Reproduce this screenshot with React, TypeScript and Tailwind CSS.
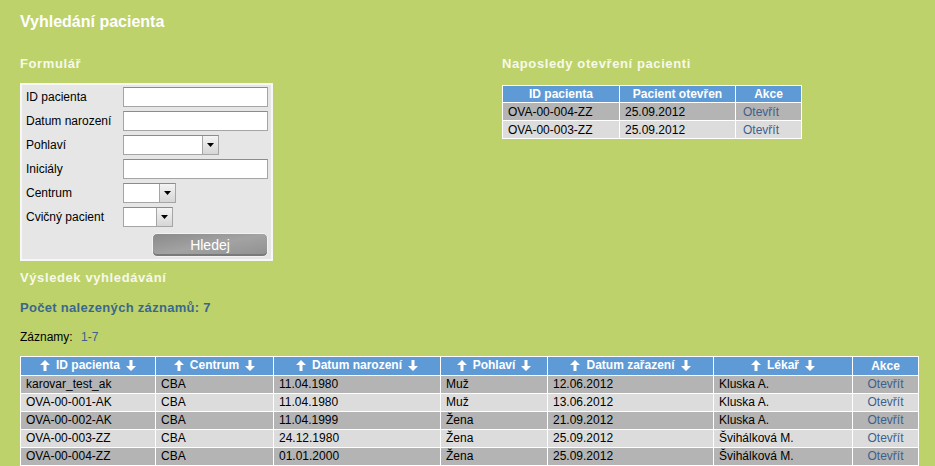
import React from 'react';

const headerCols = [
  { label: 'ID pacienta', w: 'w-[135px]' },
  { label: 'Centrum', w: 'w-[118px]' },
  { label: 'Datum narození', w: 'w-[167px]' },
  { label: 'Pohlaví', w: 'w-[107px]' },
  { label: 'Datum zařazení', w: 'w-[166px]' },
  { label: 'Lékař', w: 'w-[139px]' },
];

const rows = [
  ['karovar_test_ak', 'CBA', '11.04.1980', 'Muž', '12.06.2012', 'Kluska A.'],
  ['OVA-00-001-AK', 'CBA', '11.04.1980', 'Muž', '13.06.2012', 'Kluska A.'],
  ['OVA-00-002-AK', 'CBA', '11.04.1999', 'Žena', '21.09.2012', 'Kluska A.'],
  ['OVA-00-003-ZZ', 'CBA', '24.12.1980', 'Žena', '25.09.2012', 'Švihálková M.'],
  ['OVA-00-004-ZZ', 'CBA', '01.01.2000', 'Žena', '25.09.2012', 'Švihálková M.'],
  ['OVA-00-005-ZZ', 'CBA', '15.03.1985', 'Žena', '25.09.2012', 'Švihálková M.'],
];

const recent = [
  ['OVA-00-004-ZZ', '25.09.2012'],
  ['OVA-00-003-ZZ', '25.09.2012'],
];

const Up = () => (
  <svg width="10" height="11" viewBox="0 0 10 11" className="inline-block">
    <path d="M5 0 L10 5 L6.5 5 L6.5 11 L3.5 11 L3.5 5 L0 5 Z" fill="white" />
  </svg>
);

const Down = () => (
  <svg width="10" height="11" viewBox="0 0 10 11" className="inline-block">
    <path d="M5 11 L10 6 L6.5 6 L6.5 0 L3.5 0 L3.5 6 L0 6 Z" fill="white" />
  </svg>
);

const TextInput: React.FC = () => (
  <div className="w-[145px] h-5 bg-white border border-[#a5a5a5] border-t-[#8c8c8c]" />
);

const Select: React.FC<{ width: string }> = ({ width }) => (
  <div className={`${width} h-5 bg-white border border-[#a5a5a5] border-t-[#8c8c8c] flex justify-end`}>
    <div className="w-[16px] h-full border-l border-[#a5a5a5] bg-gradient-to-b from-[#f4f4f4] to-[#d6d6d6] flex items-center justify-center">
      <svg width="7" height="4" viewBox="0 0 7 4">
        <path d="M0 0 L7 0 L3.5 4 Z" fill="black" />
      </svg>
    </div>
  </div>
);

const FormRow: React.FC<{ label: string; children: React.ReactNode }> = ({ label, children }) => (
  <div className="flex items-center h-6">
    <div className="w-[97px] text-black">{label}</div>
    {children}
  </div>
);

export default function App() {
  return (
    <div className="h-[466px] overflow-hidden bg-[#bdd26b] px-5 pt-3 text-[12px] text-black font-['Liberation_Sans',Arial,sans-serif]">
      <h1 className="text-[16px] leading-5 font-bold text-white">Vyhledání pacienta</h1>

      <div className="flex mt-6">
        <div className="w-[253px]">
          <h2 className="text-[13px] leading-4 font-bold tracking-[0.6px] text-[#f7f9ea]">Formulář</h2>
          <div className="mt-[11px] bg-[#e6e6e6] border-2 border-[#f7f7f7] pl-1 pr-[3px] pb-[2px]">
            <FormRow label="ID pacienta"><TextInput /></FormRow>
            <FormRow label="Datum narození"><TextInput /></FormRow>
            <FormRow label="Pohlaví"><Select width="w-[96px]" /></FormRow>
            <FormRow label="Iniciály"><TextInput /></FormRow>
            <FormRow label="Centrum"><Select width="w-[53px]" /></FormRow>
            <FormRow label="Cvičný pacient"><Select width="w-[50px]" /></FormRow>
            <div className="flex justify-end mt-1">
              <button className="w-[116px] h-6 rounded-[5px] border border-[#f2f2f2] bg-gradient-to-br from-[#8a8a8a] via-[#a3a3a3] to-[#909090] text-white text-[14px] leading-none shadow-[inset_0_-2px_0_#7a7a7a]">
                Hledej
              </button>
            </div>
          </div>
        </div>

        <div className="ml-[229px]">
          <h2 className="text-[13px] leading-4 font-bold tracking-[0.6px] text-[#f7f9ea]">Naposledy otevření pacienti</h2>
          <table className="mt-[13px] border-collapse border border-white w-[300px]">
            <thead>
              <tr className="bg-[#5e9ad6] text-white font-bold h-[17px]">
                <th className="border border-white w-[117px] leading-[15px]">ID pacienta</th>
                <th className="border border-white w-[116px] leading-[15px]">Pacient otevřen</th>
                <th className="border border-white leading-[15px]">Akce</th>
              </tr>
            </thead>
            <tbody>
              {recent.map((r, i) => (
                <tr key={i} className={`h-[18px] ${i % 2 === 0 ? 'bg-[#b4b4b4]' : 'bg-[#dcdcdc]'}`}>
                  <td className="border border-white pl-[5px] leading-4">{r[0]}</td>
                  <td className="border border-white pl-[5px] leading-4">{r[1]}</td>
                  <td className="border border-white pl-[7px] leading-4 text-[#3f5f8c]">Otevřít</td>
                </tr>
              ))}
            </tbody>
          </table>
        </div>
      </div>

      <h2 className="mt-[9px] text-[13px] leading-4 font-bold tracking-[0.6px] text-[#f7f9ea]">Výsledek vyhledávání</h2>
      <div className="mt-[14px] text-[13px] leading-4 font-bold tracking-[0.3px] text-[#3b678c]">Počet nalezených záznamů: 7</div>
      <div className="mt-[14px] leading-[14px]">
        Záznamy: <span className="ml-[5px] text-[#3f5f8c]">1-7</span>
      </div>

      <table className="mt-3 w-[899px] border-collapse border border-white table-fixed">
        <thead>
          <tr className="bg-[#5e9ad6] text-white font-bold h-[18px]">
            {headerCols.map((c) => (
              <th key={c.label} className={`${c.w} border border-white leading-4 font-bold`}>
                <span className="inline-flex items-center gap-[6px]">
                  <Up />
                  {c.label}
                  <Down />
                </span>
              </th>
            ))}
            <th className="border border-white leading-4">Akce</th>
          </tr>
        </thead>
        <tbody>
          {rows.map((r, i) => (
            <tr key={i} className={`h-[18px] ${i % 2 === 0 ? 'bg-[#b4b4b4]' : 'bg-[#dcdcdc]'}`}>
              {r.map((cell, j) => (
                <td key={j} className="border border-white pl-[5px] leading-4 whitespace-nowrap">{cell}</td>
              ))}
              <td className="border border-white text-center leading-4 text-[#3f5f8c]">Otevřít</td>
            </tr>
          ))}
        </tbody>
      </table>
    </div>
  );
}
